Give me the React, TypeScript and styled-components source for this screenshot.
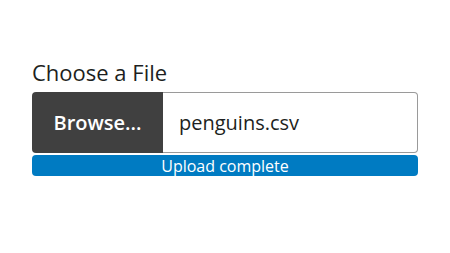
import React from "react";
import styled, { createGlobalStyle } from "styled-components";

const Global = createGlobalStyle`
  html, body { margin: 0; padding: 0; background: #fff; }
  body { font-family: "Open Sans", sans-serif; color: #1d1f21; }
`;

const Page = styled.div`
  padding: 59px 32px 0 32px;
`;

const Label = styled.label`
  display: block;
  font-size: 22px;
  line-height: 26px;
  margin-bottom: 7px;
`;

const Group = styled.div`
  display: flex;
  height: 61px;
`;

const Browse = styled.div`
  width: 131px;
  flex: none;
  background: #404040;
  color: #fff;
  border-radius: 4px 0 0 4px;
  display: flex;
  align-items: center;
  justify-content: center;
  font-size: 20px;
  font-weight: 600;
`;

const FileName = styled.div`
  flex: 1;
  border: 1px solid #9a9a9a;
  border-left: none;
  border-radius: 0 4px 4px 0;
  display: flex;
  align-items: center;
  padding-left: 16px;
  font-size: 20px;
`;

const Progress = styled.div`
  margin-top: 2px;
  height: 21px;
  border-radius: 4px;
  background: #007bc2;
  color: #fff;
  font-size: 16px;
  display: flex;
  align-items: center;
  justify-content: center;
`;

export default function App() {
  return (
    <>
      <Global />
      <Page>
        <Label>Choose a File</Label>
        <Group>
          <Browse>Browse...</Browse>
          <FileName>penguins.csv</FileName>
        </Group>
        <Progress>Upload complete</Progress>
      </Page>
    </>
  );
}
